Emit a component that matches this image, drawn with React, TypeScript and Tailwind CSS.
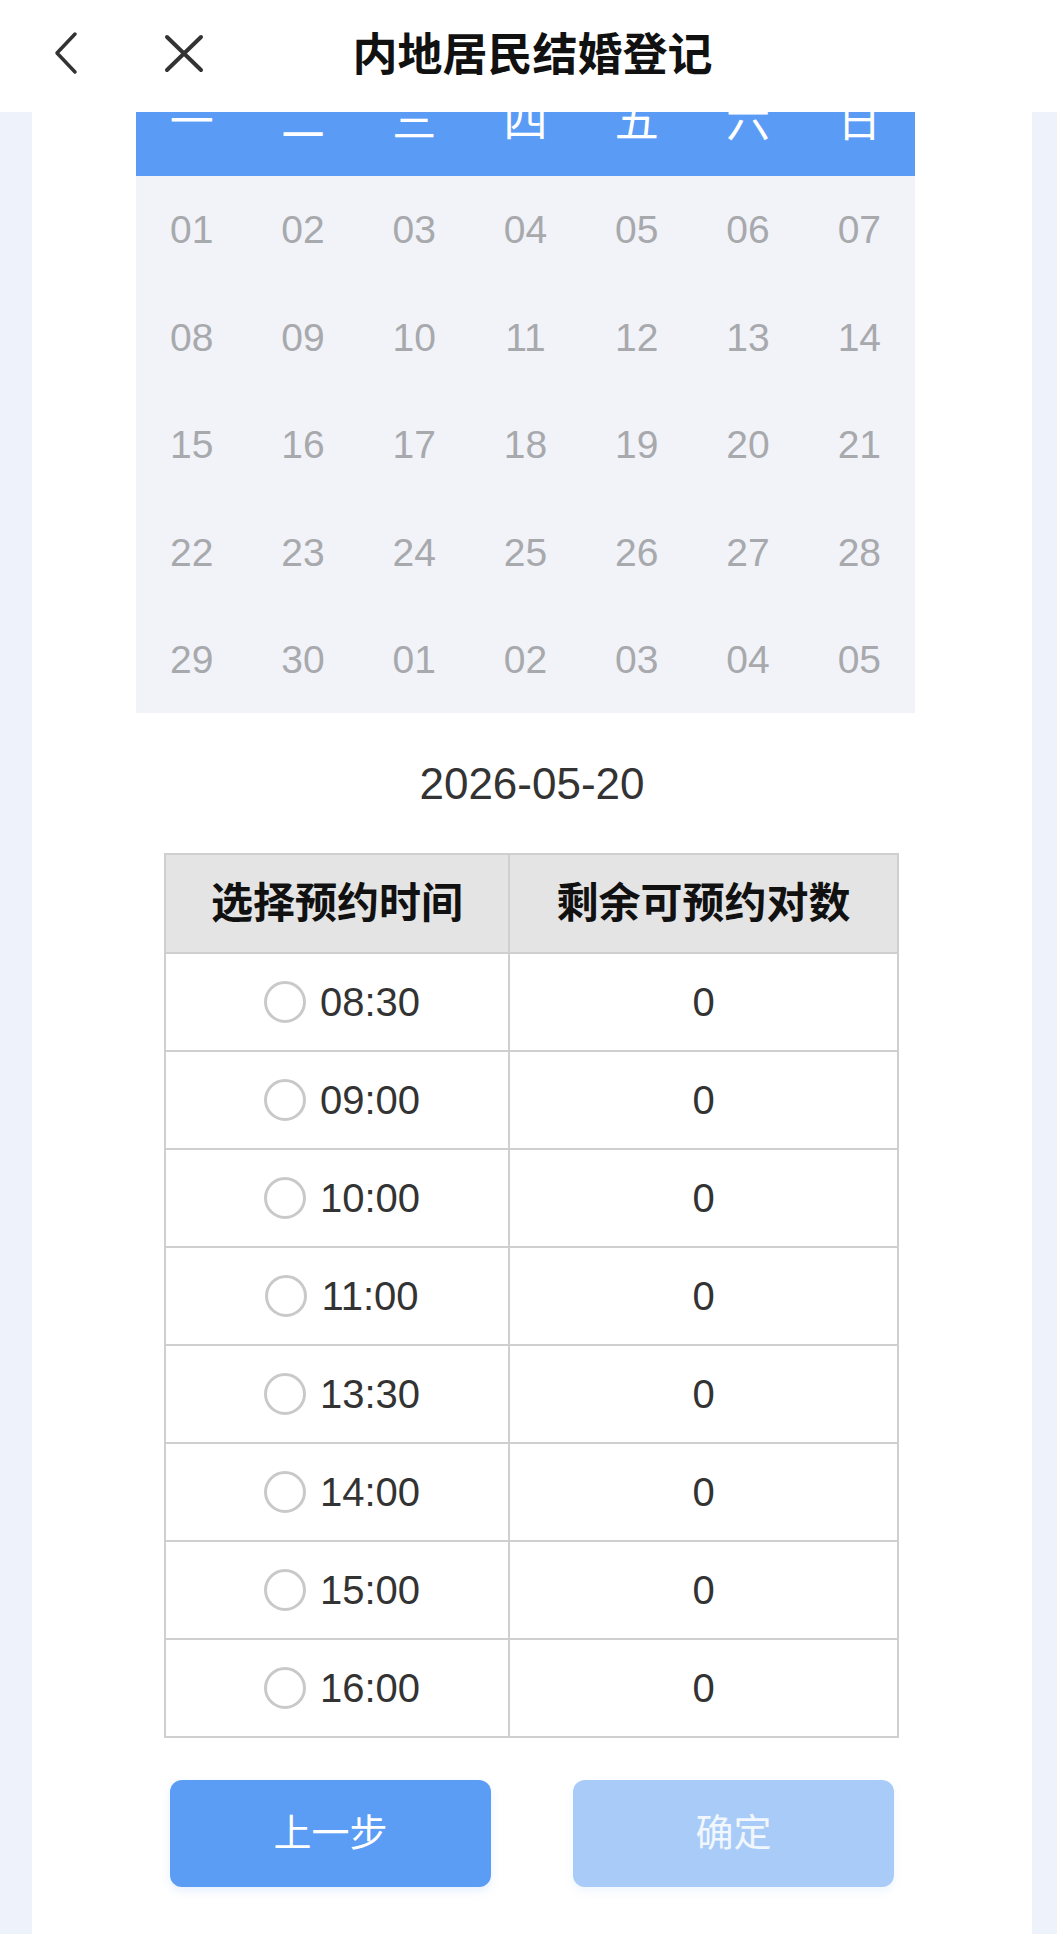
import React from "react";

const WEEKDAYS = ["一", "二", "三", "四", "五", "六", "日"];

const DAYS = [
  ["01", "02", "03", "04", "05", "06", "07"],
  ["08", "09", "10", "11", "12", "13", "14"],
  ["15", "16", "17", "18", "19", "20", "21"],
  ["22", "23", "24", "25", "26", "27", "28"],
  ["29", "30", "01", "02", "03", "04", "05"],
];

const SLOTS = ["08:30", "09:00", "10:00", "11:00", "13:30", "14:00", "15:00", "16:00"];

const FONT = { fontFamily: '"Liberation Sans", "Noto Sans CJK SC", sans-serif' };

const Header = () => (
  <div className="relative z-10 h-[112px] bg-white flex items-center">
    <svg width="40" height="50" viewBox="0 0 40 50" className="absolute left-[46px] top-[28px]">
      <polyline points="29,6 11,25 29,44" fill="none" stroke="#333" strokeWidth="3.5" strokeLinecap="round" strokeLinejoin="round" />
    </svg>
    <svg width="44" height="44" viewBox="0 0 44 44" className="absolute left-[162px] top-[32px]">
      <path d="M5 5 L39 38 M39 5 L5 38" fill="none" stroke="#333" strokeWidth="4" strokeLinecap="round" />
    </svg>
    <h1 className="w-full text-center pl-[8px] text-[45px] font-bold text-[#111]">
      内地居民结婚登记
    </h1>
  </div>
);

const Calendar = () => (
  <div className="ml-[104px] w-[779px]">
    <div className="grid grid-cols-7 h-[107px] bg-[#5a9bf5]">
      {WEEKDAYS.map((d) => (
        <div key={d} className="flex items-center justify-center pb-[2px] text-[44px] text-white">
          {d}
        </div>
      ))}
    </div>
    <div className="grid grid-cols-7 grid-rows-5 h-[537px] bg-[#f1f3f8]">
      {DAYS.flat().map((d, i) => (
        <div key={i} className="flex items-center justify-center pt-[2px] text-[39px] text-[#a8a9ad]">
          {d}
        </div>
      ))}
    </div>
  </div>
);

const SlotTable = () => (
  <div className="ml-[132px] w-[735px] border-2 border-[#cfcfcf]">
    <div className="flex h-[97px] bg-[#e4e4e4]">
      <div className="w-[344px] border-r-2 border-[#cfcfcf] flex items-center justify-center text-[42px] font-bold text-[#111]">
        选择预约时间
      </div>
      <div className="flex-1 flex items-center justify-center text-[42px] font-bold text-[#111]">
        剩余可预约对数
      </div>
    </div>
    {SLOTS.map((t) => (
      <div key={t} className="flex h-[98px] border-t-2 border-[#cfcfcf] bg-white">
        <div className="w-[344px] border-r-2 border-[#cfcfcf] flex items-center justify-center gap-[14px] pl-[10px]">
          <span className="w-[42px] h-[42px] rounded-full border-[3px] border-[#c9c9c9]" />
          <span className="text-[40px] text-[#333]">{t}</span>
        </div>
        <div className="flex-1 flex items-center justify-center text-[40px] text-[#333]">0</div>
      </div>
    ))}
  </div>
);

export default function App() {
  return (
    <div className="min-h-[1934px] bg-[#eef2fb] overflow-hidden" style={FONT}>
      <Header />
      <div className="-mt-[43px] ml-[32px] w-[1000px] min-h-[1865px] bg-white">
        <Calendar />
        <div className="mt-[41px] h-[60px] flex items-center justify-center text-[44px] text-[#333]">
          2026-05-20
        </div>
        <div className="mt-[39px]">
          <SlotTable />
        </div>
        <div className="mt-[42px] ml-[138px] flex gap-[82px]">
          <button className="w-[321px] h-[107px] rounded-[12px] bg-[#5b9cf5] text-white text-[38px] shadow-[0_4px_10px_rgba(91,156,245,0.15)]">
            上一步
          </button>
          <button className="w-[321px] h-[107px] rounded-[12px] bg-[#a9cbf7] text-white/85 text-[38px] shadow-[0_4px_10px_rgba(91,156,245,0.1)]">
            确定
          </button>
        </div>
      </div>
    </div>
  );
}
